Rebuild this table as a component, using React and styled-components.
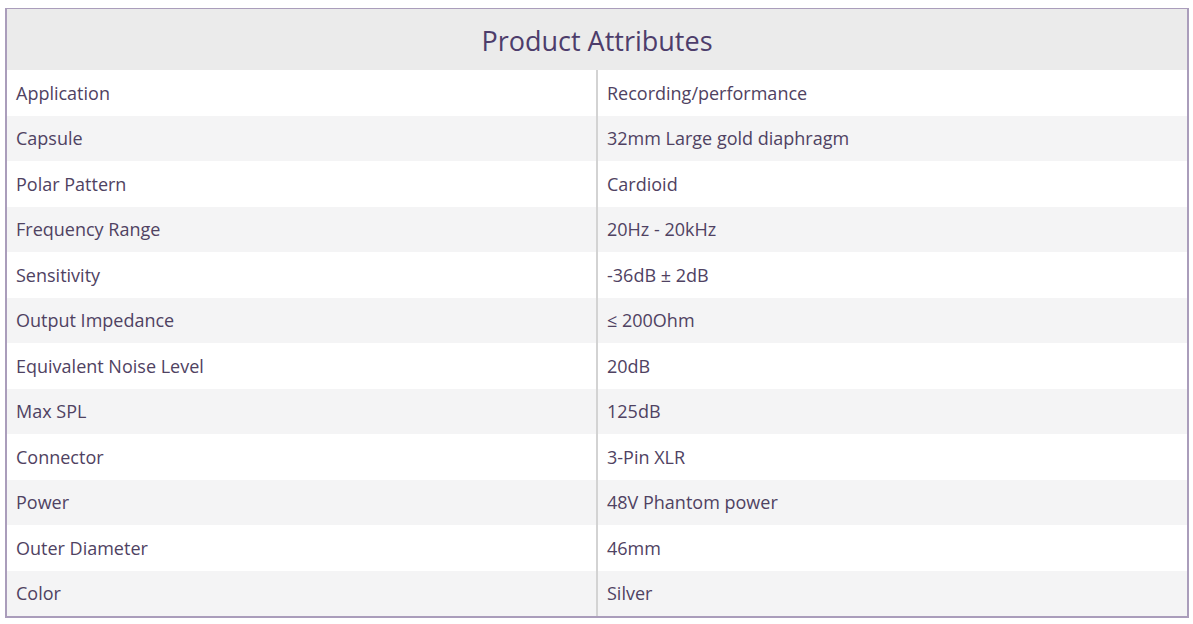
import React from "react";
import styled, { createGlobalStyle } from "styled-components";

const Global = createGlobalStyle`
  html, body { margin: 0; padding: 0; background: #ffffff; }
  body { font-family: "Open Sans", "Noto Sans", sans-serif; }
`;

const Wrap = styled.div`
  padding: 8px 4px 0 5px;
`;

const Box = styled.div`
  width: 1180px;
  border: 2px solid #aa9dbb;
  border-top-width: 1px;
  background: #ffffff;
`;

const Header = styled.div`
  height: 61px;
  background: #ebebeb;
  display: flex;
  align-items: center;
  justify-content: center;
  color: #4d3d6b;
  font-size: 27px;
  letter-spacing: 0;
  padding-top: 2px;
  box-sizing: border-box;
`;

const Row = styled.div`
  display: grid;
  grid-template-columns: 589px 1fr;
  height: 45.5px;
  background: ${(p) => (p.$alt ? "#f4f4f5" : "#ffffff")};
`;

const Cell = styled.div`
  display: flex;
  align-items: center;
  padding-left: 9px;
  font-size: 18px;
  color: #4f4262;
  letter-spacing: 0;
  ${(p) => p.$value && "border-left: 2px solid #d3d3d3;"}
`;

const rows = [
  ["Application", "Recording/performance"],
  ["Capsule", "32mm Large gold diaphragm"],
  ["Polar Pattern", "Cardioid"],
  ["Frequency Range", "20Hz - 20kHz"],
  ["Sensitivity", "-36dB ± 2dB"],
  ["Output Impedance", "≤ 200Ohm"],
  ["Equivalent Noise Level", "20dB"],
  ["Max SPL", "125dB"],
  ["Connector", "3-Pin XLR"],
  ["Power", "48V Phantom power"],
  ["Outer Diameter", "46mm"],
  ["Color", "Silver"],
];

export default function App() {
  return (
    <Wrap>
      <Global />
      <Box>
        <Header>Product Attributes</Header>
        {rows.map(([k, v], i) => (
          <Row key={k} $alt={i % 2 === 1}>
            <Cell>{k}</Cell>
            <Cell $value>{v}</Cell>
          </Row>
        ))}
      </Box>
    </Wrap>
  );
}
